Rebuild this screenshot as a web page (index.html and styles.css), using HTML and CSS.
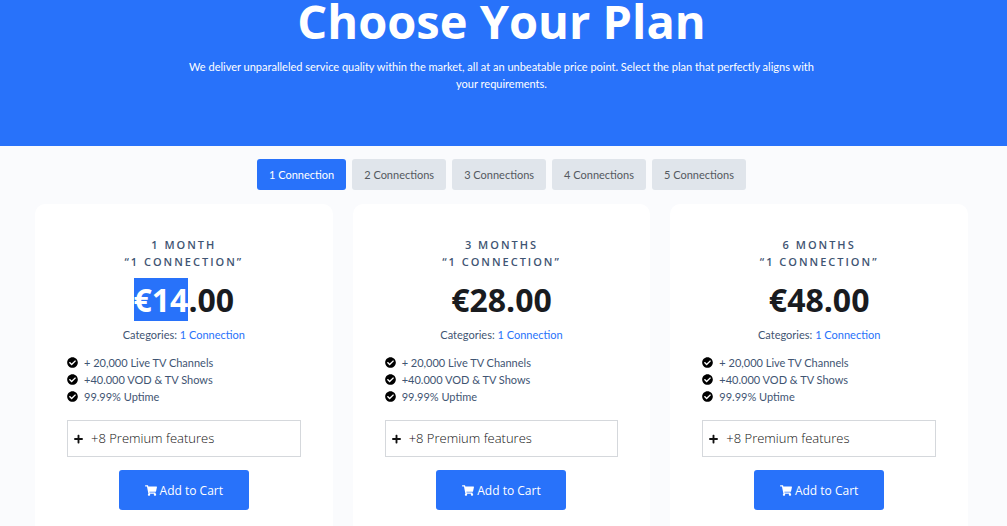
FILE: index.html
```html
<!DOCTYPE html>
<html lang="en">
<head>
<meta charset="utf-8">
<meta name="viewport" content="width=device-width, initial-scale=1">
<title>Choose Your Plan</title>
<link rel="stylesheet" href="styles.css">
</head>
<body>
<svg class="sprite" aria-hidden="true">
  <symbol id="check" viewBox="0 0 512 512"><path d="M504 256c0 136.967-111.033 248-248 248S8 392.967 8 256 119.033 8 256 8s248 111.033 248 248zM227.314 387.314l184-184c6.248-6.248 6.248-16.379 0-22.627l-22.627-22.627c-6.248-6.249-16.379-6.249-22.628 0L216 308.118l-70.059-70.059c-6.248-6.248-16.379-6.248-22.628 0l-22.627 22.627c-6.248 6.248-6.248 16.379 0 22.627l104 104c6.249 6.249 16.379 6.249 22.628.001z"/></symbol>
  <symbol id="plus" viewBox="0 0 448 512"><path d="M416 208H272V64c0-17.670-14.330-32-32-32h-32c-17.670 0-32 14.330-32 32v144H32c-17.670 0-32 14.330-32 32v32c0 17.670 14.330 32 32 32h144v144c0 17.670 14.330 32 32 32h32c17.670 0 32-14.330 32-32V304h144c17.670 0 32-14.330 32-32v-32c0-17.670-14.330-32-32-32z"/></symbol>
  <symbol id="cart" viewBox="0 0 576 512"><path d="M528.120 301.319l47.273-208C578.806 78.301 567.391 64 551.990 64H159.208l-9.166-44.810C147.758 8.021 137.930 0 126.529 0H24C10.745 0 0 10.745 0 24v16c0 13.255 10.745 24 24 24h69.883l70.248 343.435C147.325 417.100 136 435.222 136 456c0 30.928 25.072 56 56 56s56-25.072 56-56c0-15.674-6.447-29.835-16.824-40h209.647C430.447 426.165 424 440.326 424 456c0 30.928 25.072 56 56 56s56-25.072 56-56c0-22.172-12.888-41.332-31.579-50.405l5.517-24.276c3.413-15.018-8.002-29.319-23.403-29.319H218.117l-6.545-32h293.145c11.206 0 20.920-7.754 23.403-18.681z"/></symbol>
</svg>
<header class="hero">
  <h1 class="hero-title">Choose Your Plan</h1>
  <p class="hero-text">We deliver unparalleled service quality within the market, all at an unbeatable price point. Select the plan that perfectly aligns with your requirements.</p>
</header>
<main class="content">
  <div class="tabs" role="tablist">
    <button class="tab active" role="tab" aria-selected="true">1 Connection</button>
    <button class="tab" role="tab" aria-selected="false">2 Connections</button>
    <button class="tab" role="tab" aria-selected="false">3 Connections</button>
    <button class="tab" role="tab" aria-selected="false">4 Connections</button>
    <button class="tab" role="tab" aria-selected="false">5 Connections</button>
  </div>
  <div class="plans">
    <article class="card">
      <h2 class="plan-name">1 Month<br>“1 Connection”</h2>
      <p class="price"><span class="selected">€14</span>.00</p>
      <p class="category">Categories: <a href="#">1 Connection</a></p>
      <ul class="features">
        <li><svg class="check"><use href="#check"/></svg>+ 20,000 Live TV Channels</li>
        <li><svg class="check"><use href="#check"/></svg>+40.000 VOD &amp; TV Shows</li>
        <li><svg class="check"><use href="#check"/></svg>99.99% Uptime</li>
      </ul>
      <button class="more" aria-expanded="false"><svg class="plus"><use href="#plus"/></svg>+8 Premium features</button>
      <button class="buy"><svg class="cart"><use href="#cart"/></svg>Add to Cart</button>
    </article>
    <article class="card">
      <h2 class="plan-name">3 Months<br>“1 Connection”</h2>
      <p class="price">€28.00</p>
      <p class="category">Categories: <a href="#">1 Connection</a></p>
      <ul class="features">
        <li><svg class="check"><use href="#check"/></svg>+ 20,000 Live TV Channels</li>
        <li><svg class="check"><use href="#check"/></svg>+40.000 VOD &amp; TV Shows</li>
        <li><svg class="check"><use href="#check"/></svg>99.99% Uptime</li>
      </ul>
      <button class="more" aria-expanded="false"><svg class="plus"><use href="#plus"/></svg>+8 Premium features</button>
      <button class="buy"><svg class="cart"><use href="#cart"/></svg>Add to Cart</button>
    </article>
    <article class="card">
      <h2 class="plan-name">6 Months<br>“1 Connection”</h2>
      <p class="price">€48.00</p>
      <p class="category">Categories: <a href="#">1 Connection</a></p>
      <ul class="features">
        <li><svg class="check"><use href="#check"/></svg>+ 20,000 Live TV Channels</li>
        <li><svg class="check"><use href="#check"/></svg>+40.000 VOD &amp; TV Shows</li>
        <li><svg class="check"><use href="#check"/></svg>99.99% Uptime</li>
      </ul>
      <button class="more" aria-expanded="false"><svg class="plus"><use href="#plus"/></svg>+8 Premium features</button>
      <button class="buy"><svg class="cart"><use href="#cart"/></svg>Add to Cart</button>
    </article>
  </div>
</main>
</body>
</html>
```
FILE: styles.css
```css
* { box-sizing: border-box; }
body {
  margin: 0;
  background: #fafbfd;
  color: #3f5573;
  font-family: Lato, "Open Sans", sans-serif;
  font-size: 11px;
  line-height: 17px;
}
h1, h2, p, ul { margin: 0; padding: 0; }
button { font: inherit; cursor: pointer; border: 0; }
svg { fill: currentColor; flex: none; }
.sprite { display: none; }

.hero {
  display: flex;
  flex-direction: column;
  align-items: center;
  gap: 16px;
  padding: 0 39px 54px 35px;
  background: #2872fa;
  color: #fff;
  text-align: center;
}
.hero-title {
  font-family: "Open Sans", "Noto Sans", sans-serif;
  font-size: 47px;
  line-height: 42px;
  font-weight: 700;
}
.hero-text { max-width: 640px; }

.content { padding: 13px 39px 0 35px; }
.tabs { display: flex; justify-content: center; gap: 6px; }
.tab {
  padding: 7px 12px;
  border-radius: 3px;
  background: #e0e5eb;
  color: #54595f;
}
.tab.active { background: #2872fa; color: #fff; }

.plans {
  display: grid;
  grid-template-columns: repeat(3, 1fr);
  gap: 20px;
  margin-top: 14px;
}
.card {
  display: flex;
  flex-direction: column;
  align-items: center;
  padding: 32px 32px 40px;
  border-radius: 10px;
  background: #fff;
}
.plan-name {
  font-family: "Open Sans", "Noto Sans", sans-serif;
  font-size: 11px;
  line-height: 17px;
  font-weight: 600;
  letter-spacing: 2px;
  text-transform: uppercase;
  text-align: center;
}
.price {
  margin-top: 8px;
  color: #191b1f;
  font-family: "Open Sans", "Noto Sans", sans-serif;
  font-size: 32px;
  line-height: 43px;
  font-weight: 700;
}
.selected { background: #2872fa; color: #fff; }
.category { margin-top: 5px; }
.category a { color: #2872fa; text-decoration: none; }
.features {
  align-self: stretch;
  display: grid;
  margin-top: 11px;
  list-style: none;
}
.features li { display: flex; align-items: center; gap: 6px; }
.check { width: 11px; height: 11px; color: #000; }
.more {
  align-self: stretch;
  display: flex;
  align-items: center;
  gap: 8px;
  margin-top: 15px;
  padding: 9px 6px;
  border: 1px solid #d5d8dc;
  background: #fff;
  color: #111;
  font-family: "Open Sans", "Noto Sans", sans-serif;
  font-size: 13px;
  font-weight: 300;
}
.plus { width: 9px; height: 10px; }
.buy {
  display: flex;
  align-items: center;
  justify-content: center;
  gap: 3px;
  min-width: 130px;
  min-height: 40px;
  margin-top: 13px;
  border-radius: 3px;
  background: #2872fa;
  color: #fff;
  font-family: "Open Sans", "Noto Sans", sans-serif;
  font-size: 12px;
}
.cart { width: 12px; height: 11px; }
```
